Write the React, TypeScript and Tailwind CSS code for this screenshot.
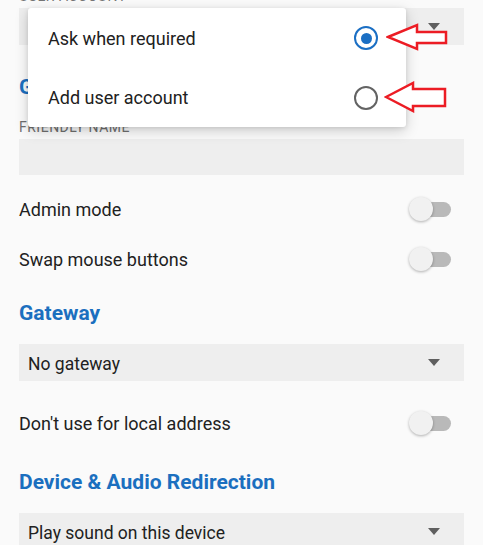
function Caret() {
  return (
    <svg width="12" height="7" viewBox="0 0 12 7" className="shrink-0">
      <path d="M0 0h12L6 7z" fill="#5f5f5f" />
    </svg>
  );
}

function Dropdown({ value }: { value?: string }) {
  return (
    <div className="flex h-[37px] items-center justify-between bg-[#eeeeee] pl-[9px] pr-[24px]">
      <span className="pt-[4px] text-[17.5px] leading-none text-[#212121]">{value}</span>
      <Caret />
    </div>
  );
}

function Toggle() {
  return (
    <div className="relative flex h-[26px] w-[42px] items-center">
      <div className="ml-[4px] h-[15px] w-[38px] rounded-full bg-[#b9b9b9]" />
      <div className="absolute left-0 top-[1px] h-[24px] w-[24px] rounded-full bg-[#f1f1f1] shadow-[0_1px_3px_rgba(0,0,0,0.3)]" />
    </div>
  );
}

function SwitchRow({ label, className = "" }: { label: string; className?: string }) {
  return (
    <div className={`flex h-[50px] items-center justify-between pr-[13px] ${className}`}>
      <span className="text-[18px] text-[#212121]">{label}</span>
      <Toggle />
    </div>
  );
}

function Heading({ children, className = "" }: { children: React.ReactNode; className?: string }) {
  return (
    <h2 className={`h-[24px] text-[21px] font-bold leading-[24px] text-[#1b6fbf] ${className}`}>{children}</h2>
  );
}

function Radio({ checked }: { checked?: boolean }) {
  return (
    <div
      className={`flex h-[24px] w-[24px] items-center justify-center rounded-full border-[2.5px] ${
        checked ? "border-[#1b6fc4]" : "border-[#636363]"
      }`}
    >
      {checked && <div className="h-[11px] w-[11px] rounded-full bg-[#1b6fc4]" />}
    </div>
  );
}

function Arrow({ w, h, points }: { w: number; h: number; points: string }) {
  return (
    <svg width={w} height={h} viewBox={`0 0 ${w} ${h}`}>
      <polygon points={points} fill="#ffffff" stroke="#ec1c24" strokeWidth="2.5" strokeLinejoin="miter" />
    </svg>
  );
}

export default function App() {
  return (
    <div
      className="relative h-[545px] w-[483px] overflow-hidden bg-[#fafafa] px-[19px]"
      style={{ fontFamily: "Roboto, 'Noto Sans', sans-serif" }}
    >
      <div className="mt-[-10px] h-[13px] text-[14px] uppercase leading-[13px] tracking-[0.5px] text-[#757575]">
        User account
      </div>
      <div className="mt-[5px]">
        <Dropdown />
      </div>

      <Heading className="mt-[30px]">General</Heading>

      <div className="mt-[20px] h-[16px] text-[14px] uppercase leading-[16px] tracking-[0.5px] text-[#6f6f6f]">
        Friendly name
      </div>
      <div className="mt-[4px] h-[36px] bg-[#eeeeee]" />

      <SwitchRow label="Admin mode" className="mt-[9px]" />
      <SwitchRow label="Swap mouse buttons" />

      <Heading className="mt-[17px]">Gateway</Heading>
      <div className="mt-[19px]">
        <Dropdown value="No gateway" />
      </div>

      <SwitchRow label="Don't use for local address" className="mt-[17px]" />

      <Heading className="mt-[22px]">Device &amp; Audio Redirection</Heading>
      <div className="mt-[19px]">
        <Dropdown value="Play sound on this device" />
      </div>

      {/* popup menu */}
      <div className="absolute left-[28px] top-[8px] w-[378px] rounded-[3px] bg-white shadow-[0_4px_14px_rgba(0,0,0,0.18),0_1px_4px_rgba(0,0,0,0.1)]">
        <div className="flex h-[60px] items-center justify-between pl-[20px] pr-[28px]">
          <span className="text-[18px] text-[#212121]">Ask when required</span>
          <Radio checked />
        </div>
        <div className="flex h-[59px] items-center justify-between pl-[20px] pr-[28px]">
          <span className="text-[18px] text-[#212121]">Add user account</span>
          <Radio />
        </div>
      </div>

      {/* annotation arrows */}
      <div className="absolute left-[386px] top-[23px]">
        <Arrow w={62} h={28} points="2,14 31,2 31,9 60,9 60,20 31,20 31,26" />
      </div>
      <div className="absolute left-[384px] top-[81px]">
        <Arrow w={63} h={32} points="2,16 29,2 29,8 61,8 61,25 29,25 29,30" />
      </div>
    </div>
  );
}
